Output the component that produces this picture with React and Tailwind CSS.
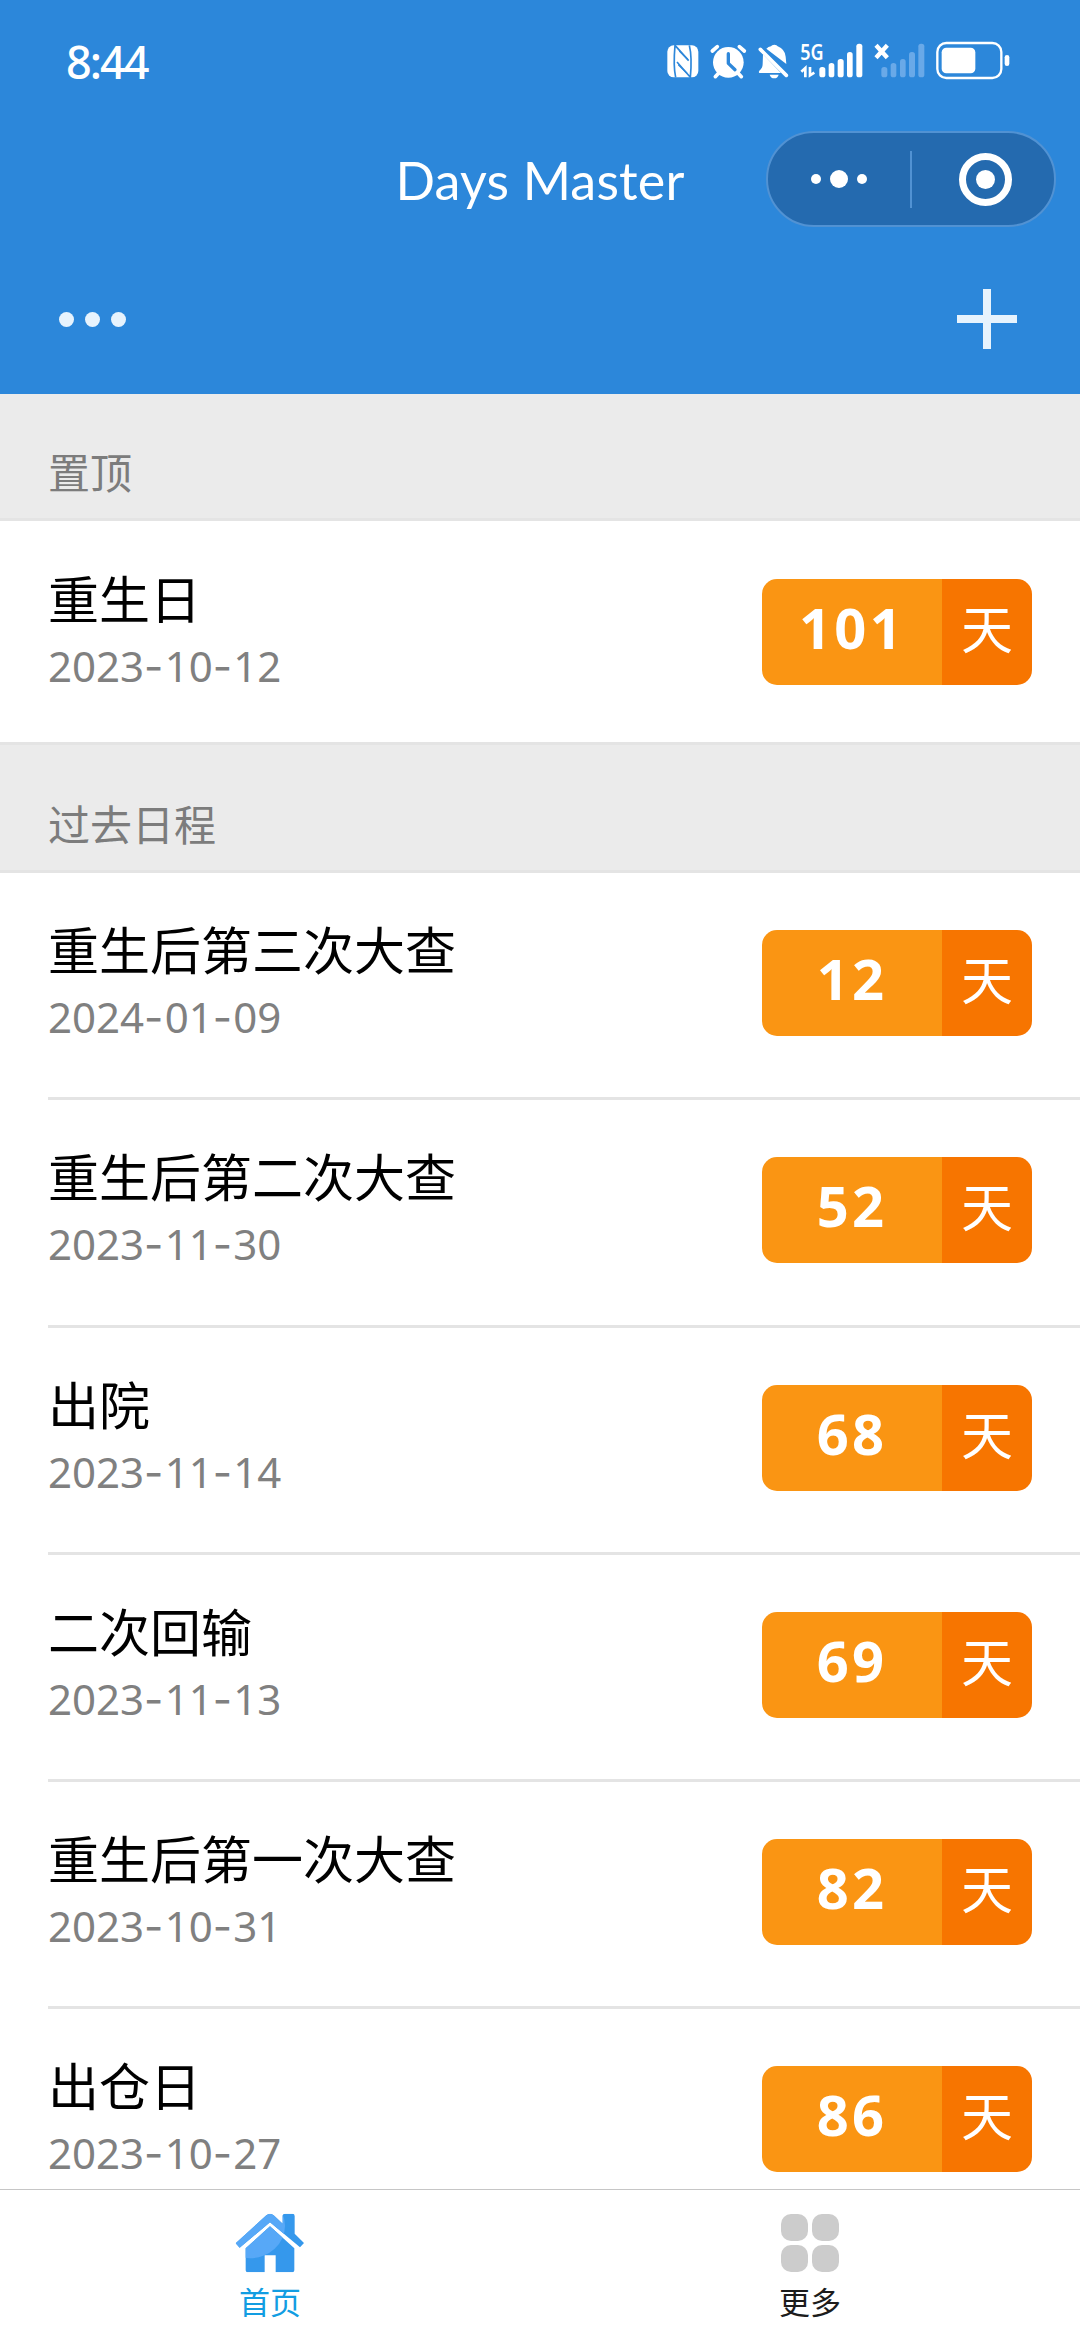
import React from "react";

const PAST = [
  { title: "重生后第三次大查", date: "2024-01-09", days: "12" },
  { title: "重生后第二次大查", date: "2023-11-30", days: "52" },
  { title: "出院", date: "2023-11-14", days: "68" },
  { title: "二次回输", date: "2023-11-13", days: "69" },
  { title: "重生后第一次大查", date: "2023-10-31", days: "82" },
  { title: "出仓日", date: "2023-10-27", days: "86" },
];

function NfcIcon() {
  return (
    <svg className="h-10 w-8" viewBox="80 60 96 120">
      <rect x="81" y="76" width="93" height="96" rx="19" fill="#fff" />
      <g fill="none" stroke="#2d87da" strokeWidth="5">
        <path d="M106 172 C101 150 101 110 104 76 L145 122" />
        <path d="M147 76 C153 100 153 140 150 172 L110 126" />
        <path d="M117 93 L142 118 M114 134 L140 160" strokeWidth="4" />
      </g>
    </svg>
  );
}

function AlarmIcon() {
  return (
    <svg className="h-10 w-[38px]" viewBox="206 60 114 120">
      <circle cx="264" cy="127" r="46" fill="#fff" />
      <g stroke="#fff" strokeLinecap="round" fill="none">
        <path d="M216 93 L231 80 M312 93 L297 80" strokeWidth="11" />
        <path d="M225 170 L238 156 M303 170 L290 156" strokeWidth="11" />
      </g>
      <path d="M264 101 V130 L284 149" stroke="#2d87da" strokeWidth="10" strokeLinecap="round" strokeLinejoin="round" fill="none" />
    </svg>
  );
}

function MutedBellIcon() {
  return (
    <svg className="h-10 w-8" viewBox="350 60 96 120">
      <path d="M378 86 Q384 80 392 79 Q394 74 402 74 Q410 74 412 79 Q434 88 436 110 L438 132 Z" fill="#fff" />
      <path d="M368 103 L422 159 L357 159 Q354 156 357 152 Q367 145 367 132 Z" fill="#fff" />
      <path d="M360 88 L438 166" stroke="#fff" strokeWidth="11" strokeLinecap="round" />
      <path d="M388 164 H415 Q412 175 402 175 Q391 175 388 164 Z" fill="#fff" />
    </svg>
  );
}

function SignalIcon() {
  return (
    <svg className="h-10 w-16 overflow-visible" viewBox="476 60 192 120">
      <text x="480" y="120" fontSize="66" fontWeight="600" fontFamily="'Noto Sans', sans-serif" fill="#fff" textLength="70" lengthAdjust="spacingAndGlyphs">
        5G
      </text>
      <g fill="#fff">
        <rect x="537" y="141" width="18" height="31" rx="8" />
        <rect x="565" y="129" width="17" height="43" rx="8" />
        <rect x="592" y="117" width="18" height="55" rx="8" />
        <rect x="620" y="96" width="17" height="76" rx="8" />
        <rect x="648" y="71" width="18" height="101" rx="8" />
      </g>
      <path d="M483 155 L495 144 V172 M509 141 V166 L522 158" stroke="#fff" strokeWidth="8" fill="none" />
    </svg>
  );
}

function NoSignalIcon() {
  return (
    <svg className="h-10 w-[52px]" viewBox="698 60 156 120">
      <path d="M707 76 L741 113 M741 76 L707 113" stroke="#fff" strokeWidth="13" />
      <g fill="#69a9e8">
        <rect x="723" y="141" width="18" height="31" rx="8" />
        <rect x="751" y="129" width="17" height="43" rx="8" />
        <rect x="779" y="117" width="17" height="55" rx="8" />
        <rect x="806" y="96" width="18" height="76" rx="8" />
        <rect x="834" y="71" width="18" height="101" rx="8" />
      </g>
    </svg>
  );
}

function BatteryIcon() {
  return (
    <svg className="h-10 w-[75px]" viewBox="884 60 225 120">
      <rect x="891" y="69" width="192" height="105" rx="27" fill="none" stroke="#fff" strokeWidth="7" />
      <rect x="904" y="83" width="101" height="77" rx="14" fill="#fff" />
      <rect x="1093" y="105" width="14" height="33" rx="7" fill="#fff" />
    </svg>
  );
}

function Header() {
  return (
    <header className="h-[394px] shrink-0 bg-[#2c87da] text-white">
      <div className="flex h-[120px] items-start justify-between pl-[66px] pr-[70px] pt-10">
        <span className="font-['Noto_Sans',sans-serif] text-[45px] font-medium leading-[43px] tracking-[-2px]">8:44</span>
        <div className="flex gap-[10px]">
          <NfcIcon />
          <AlarmIcon />
          <MutedBellIcon />
          <SignalIcon />
          <NoSignalIcon />
          <BatteryIcon />
        </div>
      </div>
      <div className="grid h-[118px] grid-cols-[1fr_auto_1fr] items-center">
        <div />
        <h1 className="pt-0.5 font-['Lato',sans-serif] text-[52px] leading-[60px] tracking-[0.2px]">Days Master</h1>
        <div className="flex justify-end pr-6">
          <div className="flex h-24 w-[290px] items-center rounded-full border-2 border-[#5192d3] bg-[#246aaf]">
            <div className="flex flex-1 items-center justify-center gap-[9px]">
              <i className="size-[10px] rounded-full bg-white" />
              <i className="size-[18px] rounded-full bg-white" />
              <i className="size-[10px] rounded-full bg-white" />
            </div>
            <i className="h-[57px] w-[2px] bg-[#5192d3]" />
            <div className="flex flex-1 items-center justify-center">
              <span className="ml-[5px] flex size-[53px] items-center justify-center rounded-full border-[7px] border-white">
                <i className="size-[19px] rounded-full bg-white" />
              </span>
            </div>
          </div>
        </div>
      </div>
      <div className="flex h-[162px] items-center justify-between pl-[59px] pr-[63px]">
        <div className="flex gap-[11px]">
          <i className="size-[15px] rounded-full bg-[#e7f3fd]" />
          <i className="size-[15px] rounded-full bg-[#e7f3fd]" />
          <i className="size-[15px] rounded-full bg-[#e7f3fd]" />
        </div>
        <svg className="size-[60px]" viewBox="0 0 60 60">
          <path d="M0 26H26V0H34V26H60V34H34V60H26V34H0Z" fill="#e7f3fd" />
        </svg>
      </div>
    </header>
  );
}

function SectionTitle({ children, className }) {
  return (
    <h2 className={"shrink-0 border-b-[3px] border-[#e4e4e4] bg-[#ebebeb] pl-12 text-[42px] leading-[60px] text-[#7c7c7c] " + className}>
      {children}
    </h2>
  );
}

function DateText({ value }) {
  const [y, m, d] = value.split("-");
  const dash = <span className="font-['Inter',sans-serif] tracking-[1.2px]">-</span>;
  return (
    <p className="mt-1.5 font-['Noto_Sans',sans-serif] text-[42px] leading-[60px] text-[#808080]">
      {y}
      {dash}
      {m}
      {dash}
      {d}
    </p>
  );
}

function Row({ item, className }) {
  return (
    <div className={"ml-12 flex shrink-0 justify-between pr-12 " + className}>
      <div className="pt-[38px]">
        <h3 className="mt-[2px] -mb-[2px] text-[51px] leading-[70px] text-black">{item.title}</h3>
        <DateText value={item.date} />
      </div>
      <div className="mt-[57px] flex h-[106px] w-[270px] overflow-hidden rounded-[15px] text-white">
        <div className="w-[180px] bg-[#fa9513] text-center font-['Open_Sans',sans-serif] text-[56px] font-bold leading-[97px] tracking-[3.3px]">
          {item.days}
        </div>
        <div className="flex-1 bg-[#f77500] text-center text-[52px] leading-[95px]">天</div>
      </div>
    </div>
  );
}

function HomeIcon() {
  return (
    <svg className="h-[60px] w-[70px]" viewBox="106 127 210 180">
      <defs>
        <clipPath id="home-shape">
          <path d="M108 218 L200 134 Q211 125 222 134 L249 159 V136 Q249 129 257 129 H278 Q285 129 285 136 V189 L313 217 L301 230 L211 155 L120 231 Z" />
          <path d="M138 233 L211 167 L284 233 V297 Q284 305 276 305 H228 V254 H195 V305 H146 Q138 305 138 297 Z" />
        </clipPath>
      </defs>
      <g clipPath="url(#home-shape)">
        <rect x="100" y="120" width="220" height="190" fill="#3598ec" />
        <ellipse cx="150" cy="165" rx="106" ry="98" fill="#57a8f7" />
      </g>
    </svg>
  );
}

function MoreIcon() {
  return (
    <div className="grid size-[58px] grid-cols-2 gap-1">
      <i className="rounded-[10px] bg-[#cccccc]" />
      <i className="rounded-[10px] bg-[#cccccc]" />
      <i className="rounded-[10px] bg-[#cccccc]" />
      <i className="rounded-[10px] bg-[#cccccc]" />
    </div>
  );
}

export default function App() {
  return (
    <div className="flex h-[2340px] w-[1080px] flex-col overflow-hidden bg-white font-['Noto_Sans_CJK_SC',sans-serif]">
      <Header />
      <main className="flex min-h-0 flex-1 flex-col overflow-hidden">
        <SectionTitle className="h-[127px] pt-[47px]">置顶</SectionTitle>
        <Row item={{ title: "重生日", date: "2023-10-12", days: "101" }} className="h-[221px] pt-px" />
        <SectionTitle className="h-[131px] border-t-[3px] pt-[48px]">过去日程</SectionTitle>
        {PAST.map((item) => (
          <Row key={item.date} item={item} className="h-[227.25px] border-b-[3px] border-[#e4e4e4]" />
        ))}
      </main>
      <nav className="grid h-[151px] shrink-0 grid-cols-2 border-t border-[#c6c6c6] text-[31px] leading-[40px]">
        <div className="flex flex-col items-center pt-[23px] text-[#129de2]">
          <HomeIcon />
          <span className="mt-[8px]">首页</span>
        </div>
        <div className="flex flex-col items-center pt-[24px] text-[#1c1c1c]">
          <MoreIcon />
          <span className="mt-[9px]">更多</span>
        </div>
      </nav>
    </div>
  );
}
